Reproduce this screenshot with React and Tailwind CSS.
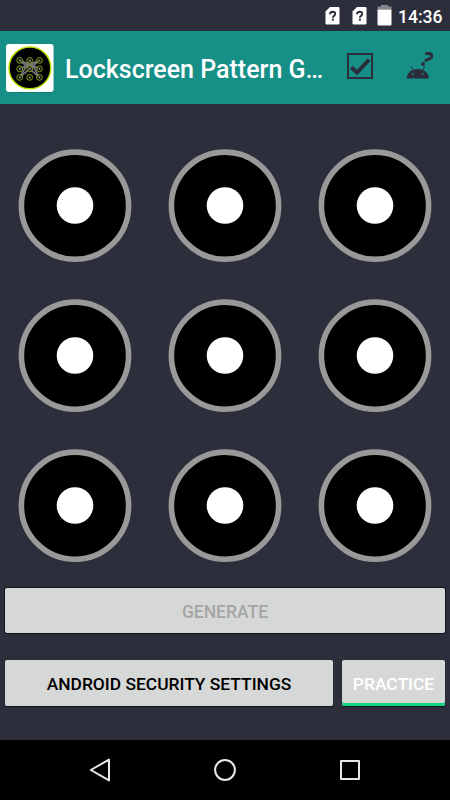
import React from 'react';

const NODE_XS = [13.7, 23.7, 33.5];
const NODE_YS = [16.4, 24.8, 33.4];

const SimIcon = () => (
  <svg width="15" height="18" viewBox="0 0 15 18">
    <path d="M5 0H13.2Q14.5 0 14.5 1.3V16.2Q14.5 17.5 13.2 17.5H1.8Q.5 17.5 .5 16.2V4.5Z" fill="#fff" />
    <path d="M5 7.3C5 5.6 6.1 4.7 7.7 4.7C9.3 4.7 10.2 5.6 10.2 6.9C10.2 8.6 7.9 8.8 7.9 10.7" fill="none" stroke="#2d2e3b" strokeWidth="1.9" />
    <rect x="6.9" y="11.7" width="2" height="1.9" fill="#2d2e3b" />
  </svg>
);

const BatteryIcon = () => (
  <svg width="15" height="21" viewBox="0 0 15 21">
    <path d="M4 0H11V1.5H14.5V4.5H.5V1.5H4Z" fill="#85858d" />
    <path d="M.5 4.5H14.5V19.5Q14.5 20.5 13.5 20.5H1.5Q.5 20.5 .5 19.5Z" fill="#fff" />
  </svg>
);

const StatusBar = () => (
  <div className="flex h-[31px] items-center bg-[#2d2e3b] pl-[325px] text-white">
    <SimIcon />
    <div className="ml-3">
      <SimIcon />
    </div>
    <div className="ml-[10px]">
      <BatteryIcon />
    </div>
    <span className="ml-[6px] mt-[2px] text-[17.5px] leading-5 font-medium whitespace-nowrap">14:36</span>
  </div>
);

const AppLogo = () => (
  <svg className="mt-px shrink-0" width="48" height="49" viewBox="0 0 48 49">
    <rect x="0.5" y="1" width="47" height="47.6" rx="3" fill="#0e6c65" />
    <rect width="47.6" height="48" rx="3" fill="#fff" />
    <circle cx="23.9" cy="23.9" r="20.9" fill="#000" stroke="#b4e000" strokeWidth="1.5" />
    <g stroke="#77777a" strokeWidth="1.7" fill="none">
      <path d="M13.7 16.4L33.5 33.4M33.5 16.4L13.7 33.4M23.7 16.4L13.7 33.4M23.7 16.4L33.5 33.4M13.7 24.8L33.5 16.4M33.5 24.8L13.7 16.4" />
    </g>
    {NODE_YS.map((y) =>
      NODE_XS.map((x) => (
        <g key={`${x}-${y}`}>
          <circle cx={x} cy={y} r="2.9" fill="#11130a" fillOpacity="0.6" stroke="#7fa01c" strokeWidth="1" />
          <circle cx={x} cy={y} r="1" fill="#8a8f7c" />
        </g>
      ))
    )}
  </svg>
);

const CheckIcon = () => (
  <svg width="26" height="26" viewBox="0 0 26 26" fill="none" stroke="#2d2e3b">
    <rect x="1" y="1" width="24" height="24" strokeWidth="2" />
    <path d="M4.3 14.2L10 19.5L22.2 6.6" strokeWidth="4" />
  </svg>
);

const HelpIcon = () => (
  <svg width="28" height="28" viewBox="0 0 28 28">
    <path d="M.7 26.5C.9 20.5 5.5 16.9 11.8 16.9S22.7 20.5 23 26.5Z" fill="#2d2e3b" />
    <path d="M5 14.3L7.5 18.5M18.8 14.3L16.3 18.5" stroke="#2d2e3b" strokeWidth="1" />
    <circle cx="6.8" cy="22" r="0.9" fill="#168f87" />
    <circle cx="16.8" cy="22" r="0.9" fill="#168f87" />
    <path d="M19.3 1.9C22.5 1 26.2 1.6 25.8 4.4C25.4 7.3 22.3 6.9 18.8 8.9" fill="none" stroke="#2d2e3b" strokeWidth="3" />
    <circle cx="17" cy="11.9" r="2" fill="#2d2e3b" />
  </svg>
);

const AppBar = () => (
  <div className="flex h-[73px] items-center bg-[#168f87] pl-[6px]">
    <AppLogo />
    <h1 className="ml-[11px] mt-[5px] w-[262px] text-[25px] leading-8 font-medium whitespace-nowrap text-white">
      Lockscreen Pattern G…
    </h1>
    <button className="ml-[20px] -mt-[3px]">
      <CheckIcon />
    </button>
    <button className="ml-[33px] -mt-[3px]">
      <HelpIcon />
    </button>
  </div>
);

const PatternGrid = () => (
  <div className="mt-[27px] grid grid-cols-3">
    {Array.from({ length: 9 }, (_, i) => (
      <div key={i} className="flex h-[150px] items-center justify-center">
        <svg width="114" height="114" viewBox="0 0 114 114">
          <circle cx="57" cy="56.7" r="53.6" fill="#000" stroke="#999" strokeWidth="5.6" />
          <circle cx="57" cy="56.5" r="18.3" fill="#fff" />
        </svg>
      </div>
    ))}
  </div>
);

const NavBar = () => (
  <div className="flex h-[60px] items-center justify-between bg-black pr-[89px] pl-[89px]">
    <svg width="22" height="24" viewBox="0 0 22 24" fill="none" stroke="#e8e8e8" strokeWidth="2" strokeLinejoin="round">
      <path d="M1.8 12L20 1.6V22.4Z" />
    </svg>
    <svg width="22" height="22" viewBox="0 0 22 22" fill="none" stroke="#e8e8e8" strokeWidth="2">
      <circle cx="11" cy="11" r="9.9" />
    </svg>
    <svg width="22" height="22" viewBox="0 0 22 22" fill="none" stroke="#e8e8e8" strokeWidth="2" strokeLinejoin="round">
      <rect x="2" y="2" width="18" height="18" />
    </svg>
  </div>
);

const App = () => {
  return (
    <div className="flex h-[800px] w-[450px] flex-col overflow-hidden bg-[#2d2e3b] font-['Roboto',sans-serif]">
      <StatusBar />
      <AppBar />
      <PatternGrid />

      <div className="mt-[7px] px-[5px]">
        <button
          disabled
          className="h-[45px] w-full rounded-[2px] bg-[#d6d8d7] pt-[3px] text-[17.5px] font-medium text-[#a4a6a5] shadow-[0_0_0_1px_#14141d]"
        >
          GENERATE
        </button>
      </div>

      <div className="mt-[27px] flex gap-[9px] px-[5px]">
        <button className="h-[46px] w-[328px] rounded-[2px] bg-[#d6d8d7] pt-[2px] text-[17.4px] font-medium text-black shadow-[0_1px_1px_0_#14141d]">
          ANDROID SECURITY SETTINGS
        </button>
        <button className="h-[46px] w-[103px] rounded-[2px] bg-[#d6d8d7] pt-[2px] text-[17.4px] font-medium text-white shadow-[inset_0_-3px_0_0_#12d580,0_1px_1px_0_#14141d]">
          PRACTICE
        </button>
      </div>

      <div className="mt-auto">
        <NavBar />
      </div>
    </div>
  );
};

export default App;
